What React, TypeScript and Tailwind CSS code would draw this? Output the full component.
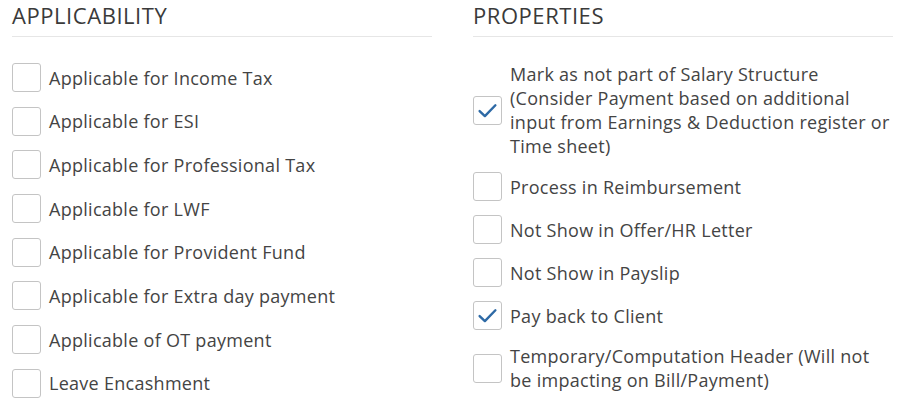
const APPLICABILITY = [
  'Applicable for Income Tax',
  'Applicable for ESI',
  'Applicable for Professional Tax',
  'Applicable for LWF',
  'Applicable for Provident Fund',
  'Applicable for Extra day payment',
  'Applicable of OT payment',
  'Leave Encashment',
];

const PROPERTIES: { label: string; checked: boolean }[] = [
  {
    label:
      'Mark as not part of Salary Structure (Consider Payment based on additional input from Earnings & Deduction register or Time sheet)',
    checked: true,
  },
  { label: 'Process in Reimbursement', checked: false },
  { label: 'Not Show in Offer/HR Letter', checked: false },
  { label: 'Not Show in Payslip', checked: false },
  { label: 'Pay back to Client', checked: true },
  { label: 'Temporary/Computation Header (Will not be impacting on Bill/Payment)', checked: false },
];

function Box({ checked }: { checked: boolean }) {
  return (
    <span className="flex h-[29px] w-[29px] shrink-0 items-center justify-center rounded-[3px] border border-[#c4c4c4] bg-white">
      {checked && (
        <svg width="21" height="21" viewBox="0 0 20 20" fill="none">
          <path d="M2.5 10.5l5 4.8L17.5 5" stroke="#2e6aa6" strokeWidth="2.3" strokeLinecap="round" strokeLinejoin="round" />
        </svg>
      )}
    </span>
  );
}

function Item({ label, checked }: { label: string; checked: boolean }) {
  return (
    <label className="flex min-h-[29px] items-center gap-2">
      <Box checked={checked} />
      <span className="text-[18px] leading-[24px] tracking-[0.28px] text-[#444444]">{label}</span>
    </label>
  );
}

function Heading({ children }: { children: string }) {
  return (
    <div className="border-b border-[#e6e6e6] pb-[9px] pt-[3px] text-[22px] leading-[24px] tracking-[0.55px] text-[#3a3a3a]">
      {children}
    </div>
  );
}

export default function App() {
  return (
    <div
      className="grid h-[404px] w-[902px] grid-cols-[420px_420px] gap-x-[41px] bg-white pl-[12px]"
      style={{ fontFamily: '"Open Sans", Lato, sans-serif' }}
    >
      <div>
        <Heading>APPLICABILITY</Heading>
        <div className="mt-[26px] flex flex-col gap-[14.7px]">
          {APPLICABILITY.map((a) => (
            <Item key={a} label={a} checked={false} />
          ))}
        </div>
      </div>
      <div>
        <Heading>PROPERTIES</Heading>
        <div className="mt-[25px] flex flex-col gap-[14px]">
          {PROPERTIES.map((p) => (
            <Item key={p.label} label={p.label} checked={p.checked} />
          ))}
        </div>
      </div>
    </div>
  );
}
